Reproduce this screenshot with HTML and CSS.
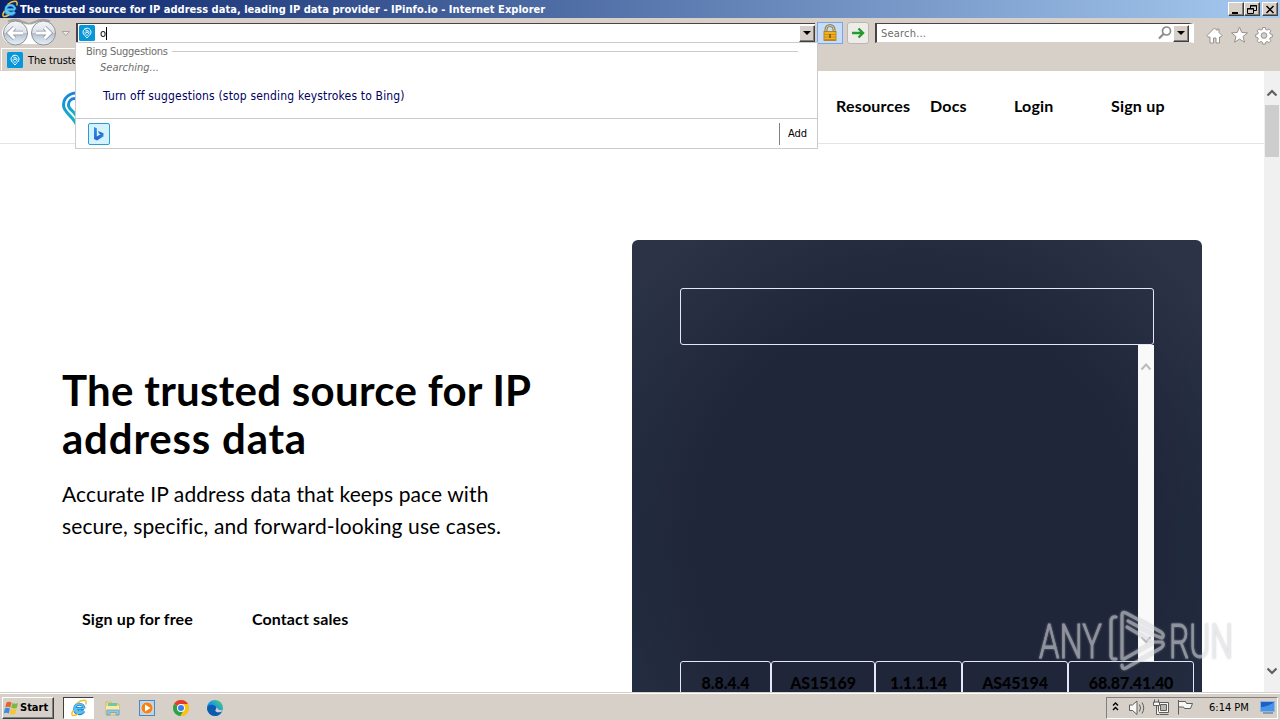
FILE: index.html
```html
<!DOCTYPE html>
<html lang="en">
<head>
  <meta charset="UTF-8" />
  <meta name="viewport" content="width=device-width, initial-scale=1.0" />
  <title>The trusted source for IP address data, leading IP data provider - IPinfo.io</title>
  <link rel="stylesheet" href="styles.css">
</head>
<body>
  <svg class="defs" width="0" height="0">
    <linearGradient id="ring" x1="0" y1="0" x2="0" y2="1">
      <stop offset="0" stop-color="#f4f5f7" /><stop offset=".48" stop-color="#dde2e9" />
      <stop offset=".5" stop-color="#b4bfce" /><stop offset="1" stop-color="#e6f2fa" />
    </linearGradient>
    <linearGradient id="pinGrad" x1="0" y1="0" x2="0" y2="1">
      <stop offset="0" stop-color="#1c83dd" /><stop offset="1" stop-color="#12b5c4" />
    </linearGradient>
    <linearGradient id="bingGrad" x1="0" y1="0" x2="1" y2="1">
      <stop offset="0" stop-color="#2f9be8" /><stop offset=".6" stop-color="#2464cf" /><stop offset="1" stop-color="#36b8ec" />
    </linearGradient>
    <linearGradient id="edgeGrad" x1="0" y1="1" x2="1" y2="0">
      <stop offset="0" stop-color="#0c59a4" /><stop offset=".55" stop-color="#1b9de2" /><stop offset="1" stop-color="#5fd25a" />
    </linearGradient>
    <symbol id="ie" viewBox="0 0 18 18">
      <path d="M14 9.500H6.500C6.500 13.500 11 14 13.500 11.500M14 9.500C14 4 5 3.500 4.700 9.500 4.500 15.500 11.500 16 13.800 12" fill="none" stroke="#1a7fc4" stroke-width="3" />
      <path d="M14 9.500H6C6.500 13.500 11 14 13.500 12M14 9.500C14 4 5 3.500 4.700 9.500 4.500 15 11.500 15.500 13.800 12" fill="none" stroke="#5cc2f5" stroke-width="1.700" />
      <path d="M3.500 11C-.5 17.500 3.500 17.500 8 15M6.500 4.500C11.500.8 18-.5 15.700 5.500" fill="none" stroke="#efc33a" stroke-width="1.500" />
    </symbol>
    <symbol id="pin" viewBox="0 0 16 16">
      <rect width="16" height="16" rx="1.500" fill="#0697db" />
      <path d="M5.400 4.200C7.300 2.200 12 3.300 12 7.200c0 2.600-2.800 3.800-4 5.800-1.200-2-4-3.200-4-5.800 0-2.200 1.800-3.600 3.800-3.600M6.300 6c1.500-1.500 3.700-.3 3.700 1.300C10 9 8.800 9.300 8 10.500 7.200 9.300 6 9 6 7.300" fill="none" stroke="#fff" stroke-width="1" />
      <circle cx="8" cy="7.200" r=".9" fill="#fff" />
    </symbol>
  </svg>

  <div class="desktop">
    <div class="titlebar">
      <svg class="title-icon" width="18" height="18"><use href="#ie" /></svg>
      <span class="title-text">The trusted source for IP address data, leading IP data provider - IPinfo.io - Internet Explorer</span>
      <div class="win-buttons">
        <button class="win-btn"><svg width="14" height="11"><path d="M3 9h6" stroke="#000" stroke-width="2" /></svg></button>
        <button class="win-btn"><svg width="14" height="11"><path d="M5.500 4V1.500h6v5H9M5 2h7M2.500 4.500h6v5h-6zM2 5h7" fill="none" stroke="#000" /></svg></button>
        <button class="win-btn close"><svg width="14" height="11"><path d="M3.500 2l7 7M10.500 2l-7 7" stroke="#000" stroke-width="1.500" /></svg></button>
      </div>
    </div>

    <div class="navbar">
      <svg class="nav-arrows" width="76" height="29">
        <rect x="2" y="4" width="53" height="22" rx="11" fill="#fff" />
        <path d="M8 3.500Q15 0 23 4Q29 7 35 4Q43 0 50 3.500" fill="none" stroke="#a5a3a4" stroke-width="2" />
        <circle cx="15.500" cy="15" r="12" fill="url(#ring)" stroke="#8e9299" />
        <circle cx="43.500" cy="15" r="12" fill="url(#ring)" stroke="#8e9299" />
        <path d="M23 15H9M14.500 9.500L9 15l5.500 5.500M36 15h14M44.500 9.500L50 15l-5.500 5.500" fill="none" stroke="#8993a3" stroke-width="4.500" />
        <path d="M23 15H9M14.500 9.500L9 15l5.500 5.500M36 15h14M44.500 9.500L50 15l-5.500 5.500" fill="none" stroke="#fff" stroke-width="3" />
        <path d="M62 13.500h7.500L65.750 17.500z" fill="#eceae7" stroke="#a8a49e" />
      </svg>
      <div class="address">
        <svg width="16" height="16"><use href="#pin" /></svg>
        <span class="typed">o</span>
        <button class="drop-btn"></button>
      </div>
      <div class="nav-btn lock">
        <svg width="24" height="20">
          <path d="M8 9V6.500a4 4 0 0 1 8 0V9" fill="none" stroke="#8b8051" stroke-width="3" />
          <path d="M8 9V6.500a4 4 0 0 1 8 0V9" fill="none" stroke="#d9d2ad" stroke-width="1" />
          <rect x="6" y="8.500" width="12" height="9" fill="#f1b51c" stroke="#a77611" stroke-width=".8" />
          <path d="M6.500 11.500h11M6.500 14h11M6.500 16.500h11" stroke="#cb8a13" />
          <path d="M12 11v4" stroke="#745213" stroke-width="1.500" />
        </svg>
      </div>
      <div class="nav-btn go">
        <svg width="20" height="20"><path d="M4 10h11M10.500 5.500L15 10l-4.500 4.500" fill="none" stroke="#279a2c" stroke-width="2.400" /></svg>
      </div>
      <div class="search">
        <span class="search-text">Search...</span>
        <svg width="14" height="16"><circle cx="8.500" cy="6" r="4" fill="none" stroke="#8b8b8b" stroke-width="1.700" /><path d="M5.500 9L1 13.500" stroke="#8b8b8b" stroke-width="2.200" /></svg>
        <button class="drop-btn"></button>
      </div>
      <svg class="tools" width="68" height="20">
        <g fill="#fff" stroke="#96928e" stroke-linejoin="round">
          <path d="M1 10.500L8.500 3l2.500 2.500V4h2v3.500l3 3-1 1.500h-1.500v6H10v-5H7.500v5H4v-6H2z" />
          <path d="M33.500 2l2.200 5.400 5.800.4-4.500 3.700 1.500 5.700-5-3.100-5 3.100 1.500-5.700-4.500-3.700 5.800-.4z" />
          <path d="M56.700 2.500h2.600l.5 2 1.300.6 1.900-1.200 1.900 1.900-1.200 1.900.6 1.300 2 .5v2.600l-2 .5-.6 1.300 1.200 1.900-1.900 1.900-1.900-1.200-1.300.6-.5 2h-2.600l-.5-2-1.300-.6-1.900 1.200-1.900-1.900 1.200-1.900-.6-1.300-2-.5V9.500l2-.5.600-1.300-1.200-1.900 1.900-1.900 1.900 1.200 1.300-.6z" />
          <circle cx="58" cy="10.500" r="2.800" fill="#d6d0c9" />
        </g>
      </svg>
    </div>

    <div class="tabbar">
      <div class="tab">
        <svg width="16" height="16"><use href="#pin" /></svg>
        <span>The truste</span>
      </div>
    </div>

    <div class="viewport">
      <div class="page">
        <header class="site-header">
          <svg class="logo" width="26" height="34" fill="none" stroke="url(#pinGrad)" stroke-width="3">
            <path d="M8 3.500C17-1 24.500 6 24.500 14 24.500 21 17 24 13 31 9 24 1.500 21 1.500 14 1.500 9 4 5.500 8 3.500" />
            <path d="M13 7.500c-4 0-6.500 3-6.500 6.500 0 4.500 4 5 6.500 9 2.500-4 6.500-5 6.500-9 0-4-3-6.500-6.500-6.500" />
          </svg>
          <nav class="site-nav">
            <a class="nav-resources">Resources</a>
            <a class="nav-docs">Docs</a>
            <a class="nav-login">Login</a>
            <a class="nav-signup">Sign up</a>
          </nav>
        </header>
        <main class="hero">
          <section class="intro">
            <h1>The trusted source for IP<br><span class="line-two">address data</span></h1>
            <p>Accurate IP address data that keeps pace with<br>secure, specific, and forward-looking use cases.</p>
            <div class="actions">
              <a>Sign up for free</a>
              <a>Contact sales</a>
            </div>
          </section>
          <section class="card">
            <div class="lookup"></div>
            <div class="result">
              <div class="result-scroll">
                <svg width="16" height="12"><path d="M3.500 9.500L8 4.500l4.500 5" fill="none" stroke="#bbb" stroke-width="2" /></svg>
                <svg width="16" height="12"><path d="M3.500 3L8 8l4.500-5" fill="none" stroke="#bbb" stroke-width="2" /></svg>
              </div>
            </div>
            <div class="samples">
              <span class="s1">8.8.4.4</span>
              <span class="s2">AS15169</span>
              <span class="s3">1.1.1.14</span>
              <span class="s4">AS45194</span>
              <span class="s5">68.87.41.40</span>
            </div>
          </section>
        </main>
      </div>
      <div class="scrollbar">
        <svg width="16" height="12"><path d="M3.500 8.500L8 4l4.500 4.500" fill="none" stroke="#606060" stroke-width="2.200" /></svg>
        <div class="thumb"></div>
        <svg width="16" height="12"><path d="M3.500 4.500L8 9l4.500-4.500" fill="none" stroke="#606060" stroke-width="2.200" /></svg>
      </div>
    </div>

    <div class="taskbar">
      <button class="start">
        <svg width="17" height="16">
          <path d="M3.500 2.500Q6 1 8.500 2.500L7.300 7.500Q5 6 2.300 7.300z" fill="#e8622c" />
          <path d="M9.300 3Q12 4.500 15 3L13.800 8Q11 9 8.200 7.700z" fill="#7dba3c" />
          <path d="M2 8.300Q4.500 7 7 8.500L5.800 13.500Q3.500 12 .8 13.300z" fill="#3e8ede" />
          <path d="M7.900 8.800Q10.700 10 13.500 9L12.300 14Q9.500 15 6.700 13.700z" fill="#f6c62f" />
        </svg>
        <span>Start</span>
      </button>
      <div class="task active"><svg width="18" height="18"><use href="#ie" /></svg></div>
      <div class="task"><svg width="18" height="18">
        <path d="M2 3h5l1 2h7v11H2z" fill="#f3dc85" stroke="#cfac4e" stroke-width=".7" />
        <path d="M4 4h9v3H4z" fill="#72c6a0" /><path d="M2 7h13v4H2z" fill="#f8eaa9" />
        <path d="M3 16v-5h12v5h-3v-2.500H6V16z" fill="#8fc6ea" stroke="#5b9bc8" stroke-width=".7" />
      </svg></div>
      <div class="task"><svg width="18" height="18">
        <rect x="1.500" y="1.500" width="15" height="15" fill="#b9d4ee" stroke="#4f86bd" />
        <circle cx="9" cy="9" r="6" fill="#f58216" stroke="#e6e9ed" stroke-width=".7" /><path d="M7 5.500v7L12.500 9z" fill="#fff" />
      </svg></div>
      <div class="task"><svg width="18" height="18">
        <circle cx="9" cy="9" r="8" fill="#fbc116" />
        <path d="M9 9L2.070 5A8 8 0 0 1 15.930 5z" fill="#e33b2e" />
        <path d="M9 9L2.070 5A8 8 0 0 0 8.500 17L12 10.500z" fill="#2da24c" />
        <path d="M9 5h6.930A8 8 0 0 1 8.500 17L12.500 11z" fill="#fbc116" />
        <circle cx="9" cy="9" r="4" fill="#fff" /><circle cx="9" cy="9" r="3" fill="#3b7de9" />
      </svg></div>
      <div class="task"><svg width="18" height="18">
        <circle cx="9" cy="9" r="8" fill="url(#edgeGrad)" />
        <path d="M1.200 9C2 5 9 4.500 10.500 9c.5 1.500-1.500 2-1 3 .8 1.800 4.500 1.500 6.500.3C14 17 9 18 5.500 16 3 14.500 1 12 1.200 9z" fill="#0d5bb0" />
        <path d="M10.300 8c.8 2-1.300 2.500-.8 4 1 1.800 5 1.500 6.500.2l1-1.200c-3 1-5-.5-6.700-3z" fill="#d6d0c9" />
      </svg></div>
      <div class="tray">
        <svg width="88" height="20">
          <path d="M6 7.500L8.500 5 11 7.500M6 12l2.500-2.500L11 12" fill="none" stroke="#000" stroke-width="1.400" />
          <g fill="#f7f7f5" stroke="#5f5e5c">
            <path d="M22.500 7h3l4.500-4v13.500l-4.500-4h-3z" />
            <path d="M32.500 6.500q2 3.500 0 7M35 4.500q3.500 5.500 0 11" fill="none" />
            <path d="M51.500 4.500h10v10h-10zM53 16.500h8.500" /><path d="M53.500 6.500h6v6h-6z" fill="#b9b7b4" />
            <path d="M47.500 1.500v3M51.500 1.500v3M46.500 4h6v3.500h-6zM49.500 8v8.500h3" />
            <path d="M71.500 2v14.500M71.500 3.500h7l1 2h6l-2 5h-6l-1-1.500h-5z" />
          </g>
        </svg>
        <span class="clock">6:14 PM</span>
        <svg width="18" height="16"><path d="M2.500 1.500h14v10h-14z" fill="#1b5fc7" stroke="#8db6e4" /><path d="M3 7Q10 7 16 2v9H3z" fill="#4795e4" /><path d="M5 13h10" stroke="#72899f" stroke-width="1.500" /></svg>
      </div>
    </div>
  </div>

  <!-- address bar suggestions -->
  <div class="suggest">
    <div class="suggest-head"><span>Bing Suggestions</span><i></i></div>
    <div class="searching">Searching...</div>
    <div class="turn-off">Turn off suggestions (stop sending keystrokes to Bing)</div>
    <div class="suggest-foot">
      <div class="bing"><svg width="20" height="20"><path d="M5 3l2.800 1.200v8.300l4-2.200L10 9.400 9 7l5.500 2.200v3.300L8 16.500 5 15z" fill="url(#bingGrad)" /></svg></div>
      <div class="add">Add</div>
    </div>
  </div>

  <svg class="watermark" width="204" height="66">
    <g class="wm-text">
      <text x="3" y="50" textLength="63" lengthAdjust="spacingAndGlyphs">ANY</text>
      <text x="133" y="50" textLength="64" lengthAdjust="spacingAndGlyphs">RUN</text>
    </g>
    <path d="M80 9Q75 8 75 14V48Q75 52 80 51M86 51V7Q86 3 90 5L125 24Q129 27 126 30L118 27 92 13M91 19L113 32M86 57Q86 62 90 60L125 40Q129 37 126 34L118 34 88 51" fill="none" stroke="#d9dce0" stroke-width="3.200" stroke-linecap="round" stroke-linejoin="round" />
  </svg>
</body>
</html>
```
FILE: styles.css
```css
* { box-sizing: border-box; }
body { margin: 0; width: 1280px; height: 720px; overflow: hidden; position: relative; background: #fff; color: #000; font-family: "DejaVu Sans Condensed", "DejaVu Sans", sans-serif; font-stretch: condensed; font-size: 11px; }
svg { display: block; flex: none; }
button { padding: 0; border-radius: 0; font: inherit; color: #000; }
.defs { position: absolute; }
.desktop { display: flex; flex-direction: column; height: 720px; }

/* window frame */
.titlebar { display: flex; align-items: center; height: 18px; padding: 0 2px 0 1px; background: linear-gradient(90deg, #0a246a, #a6caf0); }
.title-icon { margin-right: 1px; }
.title-text { color: #fff; font-weight: bold; letter-spacing: 0.03px; white-space: nowrap; }
.win-buttons { display: flex; margin-left: auto; }
.win-btn { width: 16px; height: 14px; background: #d6d0c9; border: 1px solid; border-color: #fff #404040 #404040 #fff; box-shadow: inset -1px -1px #808080; overflow: hidden; }
.win-btn.close { margin-left: 2px; }
.navbar { display: flex; align-items: flex-start; height: 30px; background: #d6d0c9; }
.address, .search { display: flex; align-items: center; height: 20px; margin-top: 5px; background: #fff; border: 1px solid #808080; border-top: 1px solid #4b4245; border-bottom-color: #d6d0c9; }
.address { width: 739px; padding-left: 1px; border-left: 2px solid #4b4245; border-right: 0; }
.typed { margin-left: 5px; border-right: 1px solid #000; line-height: 13px; }
.drop-btn { display: flex; align-items: center; justify-content: center; width: 16px; height: 17px; margin-left: auto; background: #d6d0c9; border: 1px solid; border-color: #fff #404040 #404040 #fff; box-shadow: inset -1px -1px #808080; }
.drop-btn::before { content: ""; border: 4px solid transparent; border-top-color: #000; border-bottom: 0; }
.nav-btn { display: flex; align-items: center; justify-content: center; height: 22px; margin-top: 4px; }
.lock { width: 26px; margin-left: 2px; background: #c6dcf8; border: 1px solid #78a7e8; }
.go { width: 22px; margin-left: 4px; background: #eeece9; border: 1px solid #bcb7b0; border-radius: 3px; }
.search { width: 319px; margin-left: 6px; padding-left: 4px; border-left: 2px solid #4b4245; border-right: 5px solid #fff; }
.search-text { color: #6d6d6d; letter-spacing: .2px; }
.search svg { margin-left: auto; }
.search .drop-btn { margin-left: 1px; }
.tools { margin: 7px 6px 0 auto; }
.tabbar { height: 23px; background: #d6d0c9; }
.tab { display: flex; align-items: center; width: 200px; height: 22px; margin-left: 1px; padding: 1px 0 0 5px; border-top: 1px solid #fff; border-left: 1px solid #fff; }
.tab span { margin-left: 5px; letter-spacing: -.15px; white-space: nowrap; }

/* page */
.viewport { display: flex; height: 621px; overflow: hidden; }
.page { width: 1264px; font-family: Lato, sans-serif; font-stretch: normal; }
.scrollbar { width: 16px; background: #f0f0f0; display: flex; flex-direction: column; padding: 16px 0; }
.thumb { height: 52px; width: 14px; margin: 6px 1px auto; background: #cdcdcd; }
.site-header { display: flex; height: 73px; padding: 0 98px 0 62px; border-bottom: 1px solid #e4e4e6; }
.logo { margin-top: 20px; }
.site-nav { display: flex; margin-left: auto; padding-top: 25px; font-size: 16px; font-weight: bold; line-height: 20px; letter-spacing: .2px; }
.nav-resources { width: 94px; }
.nav-docs { width: 84px; }
.nav-login { width: 97px; }
.nav-signup { width: 55px; }
.hero { display: flex; padding: 0 62px; }
.intro { width: 570px; padding-top: 222px; }
h1 { margin: 0; font-size: 42px; line-height: 48px; font-weight: bold; letter-spacing: .28px; white-space: nowrap; }
.line-two { letter-spacing: .8px; }
p { margin: 16px 0 0; font-size: 21px; line-height: 32px; letter-spacing: .11px; white-space: nowrap; }
.actions { display: flex; gap: 59px; margin-top: 67px; padding-left: 20px; font-size: 16px; line-height: 20px; font-weight: bold; letter-spacing: .12px; }
.card { width: 570px; height: 520px; margin-top: 96px; padding: 48px; border-radius: 6px; background: radial-gradient(ellipse 65% 75% at 50% 58%, #202639 60%, transparent 100%), radial-gradient(ellipse 30% 60% at 0 65%, #223145, transparent), radial-gradient(ellipse 30% 50% at 100% 65%, #1f2d42, transparent), #2c3347; }
.lookup { height: 57px; border: 1px solid #e4e6fa; border-radius: 3px; }
.result { display: flex; justify-content: flex-end; height: 316px; }
.result-scroll { display: flex; flex-direction: column; justify-content: space-between; width: 16px; padding: 15px 0; background: #f9f9fa; }
.samples { display: flex; width: 514px; font-size: 16px; font-weight: 900; letter-spacing: -.1px; }
.samples span { height: 60px; padding-top: 11px; text-align: center; line-height: 20px; border: 1px solid #e4e6fa; border-radius: 3px; }
.s1 { width: 91px; }
.s2 { width: 104px; }
.s3 { width: 87px; }
.s4 { width: 106px; }
.s5 { width: 126px; }

/* taskbar */
.taskbar { display: flex; align-items: center; height: 28px; padding: 2px 2px 0; background: #d6d0c9; border-top: 1px solid #d6d0c9; box-shadow: inset 0 1px #fff; }
.start { display: flex; align-items: center; width: 52px; height: 22px; margin-right: 9px; background: #d6d0c9; border: 1px solid; border-color: #fff #404040 #404040 #fff; box-shadow: inset -1px -1px #808080; font-weight: bold; }
.task { display: flex; align-items: center; justify-content: center; width: 31px; height: 22px; margin-right: 3px; }
.task.active { background: #fff; border: 1px solid; border-color: #404040 #fff #fff #404040; }
.tray { display: flex; align-items: center; width: 172px; height: 22px; margin-left: auto; border: 1px solid; border-color: #808080 #fff #fff #808080; }
.clock { width: 49px; margin-left: 14px; white-space: nowrap; }

/* suggestions dropdown */
.suggest { position: absolute; left: 75px; top: 42px; width: 743px; height: 107px; background: #fff; border: 1px solid #cbcbcb; color: #6d6d6d; }
.suggest-head { display: flex; align-items: center; height: 15px; padding: 2px 19px 0 10px; letter-spacing: -.25px; }
.suggest-head i { flex: 1; height: 1px; margin-left: 4px; background: #cbcbcb; }
.searching { height: 16px; padding-left: 24px; font-style: italic; line-height: 19px; }
.turn-off { height: 44px; padding: 14px 0 0 27px; color: #00005f; line-height: 16px; font-size: 12px; letter-spacing: .17px; }
.suggest-foot { display: flex; align-items: center; justify-content: space-between; height: 30px; padding: 0 10px 0 12px; border-top: 1px solid #cbcbcb; }
.bing { width: 22px; height: 22px; background: #d5f3ff; border: 1px solid #2d9ad4; border-radius: 2px; }
.add { width: 29px; margin-right: -1px; margin-left: auto; padding-left: 8px; color: #000; line-height: 22px; border-left: 1px solid #808080; }

.watermark { position: absolute; left: 1036px; top: 608px; opacity: .6; overflow: visible; filter: drop-shadow(0 0 1px #aaa); }
.wm-text { font: 300 49px Roboto, sans-serif; fill: #d9dce0; stroke: #d9dce0; stroke-width: .8; }
```
